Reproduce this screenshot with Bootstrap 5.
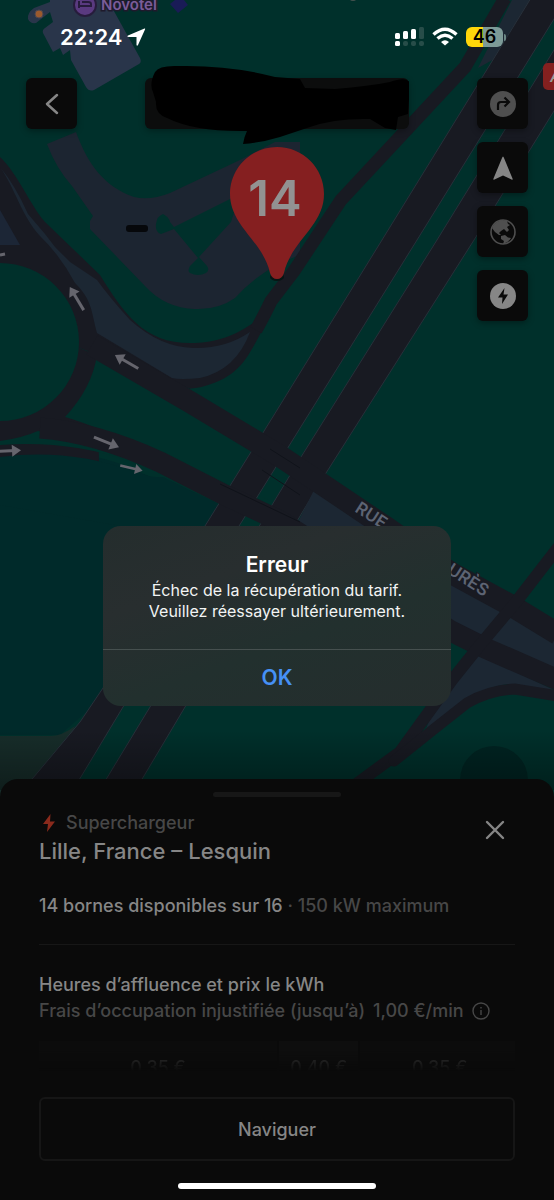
<!DOCTYPE html>
<html lang="fr">
<head>
<meta charset="utf-8">
<meta name="viewport" content="width=device-width, initial-scale=1">
<title>Superchargeur</title>
<link href="https://cdn.jsdelivr.net/npm/bootstrap@5.3.0/dist/css/bootstrap.min.css" rel="stylesheet">
<style>
  body { font-family: Inter, "Liberation Sans", sans-serif; background: #0a0a0a; color: #868686; }
  .screen { background: #00302b; }
  .map-layer { inset: 0; }
  .over-map { z-index: 1; }

  .status-bar { height: 78px; padding: 0 48px 4px 60px; color: #fff; }
  .clock { font-size: 22px; line-height: 28px; font-weight: 600; }
  .battery { width: 37px; height: 20px; border-radius: 6px; background: linear-gradient(90deg, #ffd60a 46%, #7d9a97 46%); color: #000; font-size: 18px; line-height: 20px; font-weight: 600; }
  .battery-cap { width: 2px; height: 7px; margin-left: 1px; border-radius: 0 2px 2px 0; background: #6c8785; }

  .controls { padding: 0 26px; gap: 68px; }
  .map-btn { width: 51px; height: 51px; border: 0; border-radius: 6px; background: #0a0a0a; color: #868686; box-shadow: 0 2px 6px rgba(0, 0, 0, .35); }
  .map-btn:hover { background: #151515; }
  .map-btn.dim { color: #4f4f4f; }
  .stack { gap: 13px; }
  .place-box { height: 51px; border-radius: 6px; background: #0c0d0d; box-shadow: 0 2px 6px rgba(0, 0, 0, .3); }
  .marker-ink { left: 0; top: -14px; width: 100%; height: 84px; }

  .alert-layer { inset: 0; padding-top: 32px; z-index: 3; }
  .alert-box { width: 348px; border-radius: 18px; background: linear-gradient(160deg, #242d2d 0%, #282e2f 30%, #22302e 60%, #252d2d 100%); color: #f2f4f4; overflow: hidden; }
  .alert-text { padding: 25px 24px 27px; }
  .alert-text h1 { font-size: 21px; line-height: 28px; font-weight: 600; color: #fff; }
  .alert-text p { padding: 1px 16px 0; font-size: 16px; line-height: 21px; }
  .alert-ok { height: 57px; border: 0; border-top: 1px solid #46504f; background: transparent; color: #4690f5; font-size: 21px; line-height: 28px; font-weight: 600; }

  .sheet { background: #0a0a0a; border-radius: 18px 18px 0 0; padding: 13px 39px 11px; z-index: 2; }
  .grip { width: 128px; height: 5px; border-radius: 3px; background: #171717; }
  .kind { margin-top: 14px; font-size: 18px; line-height: 24px; font-weight: 500; gap: 8px; }
  .muted { color: #474747; }
  .place { font-size: 22px; line-height: 32px; font-weight: 500; }
  .close-btn { width: 40px; height: 40px; margin-top: 13px; border: 0; background: transparent; color: #868686; }
  .line { font-size: 18px; line-height: 26px; font-weight: 500; }
  .stalls { margin-top: 26px; }
  .sep { height: 1px; background: #171717; margin: 25px 0 27px; }
  .info-btn { border: 0; background: transparent; color: #474747; }
  .rates { height: 30px; margin-top: 17px; gap: 2px; overflow: hidden; font-size: 18px; line-height: 24px; font-weight: 500; color: #363636; -webkit-mask-image: linear-gradient(#000 30%, transparent 100%); mask-image: linear-gradient(#000 30%, transparent 100%); }
  .rate { background: #0c0c0c; padding-top: 15px; min-width: 0; }
  .rate.peak { background: #0e0e0e; }
  .go-btn { height: 64px; margin-top: 26px; border: 2px solid #161616; border-radius: 6px; background: transparent; color: #868686; font-size: 18px; font-weight: 500; }
  .home-bar { width: 198px; height: 6px; border-radius: 3px; background: #fff; margin-top: 22px; }
</style>
</head>
<body>
<main class="screen position-relative min-vh-100 d-flex flex-column overflow-hidden">

  <svg class="map-layer position-absolute w-100 h-100" viewBox="0 0 554 1200" preserveAspectRatio="xMidYMin slice" role="img" aria-label="Carte">
    <defs>
      <linearGradient id="fade" x1="0" y1="0" x2="0" y2="1"><stop offset="0" stop-opacity="0"/><stop offset="1" stop-opacity=".35"/></linearGradient>
      <g id="arrow" fill="none" stroke="#65656d" stroke-width="3"><path d="M-13 0H9"/><path d="M5-6L14 0L5 6Z" fill="#65656d" stroke="none"/></g>
    </defs>
    <rect width="554" height="1200" fill="#00302b"/>
    <path d="M0 450C60 446 105 456 140 472L240 520L100 700L60 735H0Z" fill="#002a2a"/>
    <path d="M0 736H50Q62 736 75 726L40 800H0Z" fill="#172d2a"/>
    <!-- buildings -->
    <path d="M50 0H108L115 13L140 58Q142 62 139 64L94 90Q89 92 86 87L71 60L70 50L63 55L60 48L53 52L43 33Q42 30 45 28L53 22L50 12L36 23Q30 24 28 19Q27 13 34 8L50 2Z" fill="#29354a"/>
    <circle cx="39" cy="14" r="4" fill="#9b5a2e" stroke="#4b4650"/>
    <path d="M170 4L175 0H184L188 5L178 13Z" fill="#191b56"/>
    <circle cx="85" cy="5" r="11" fill="#5a3a80" stroke="#271c3c" stroke-width="2"/>
    <path d="M79 1V8M79 6H91V4Q91 2 88 2H82" fill="none" stroke="#271c3c" stroke-width="2"/>
    <text x="101" y="10" font-size="15" font-weight="600" fill="#7a5d99" stroke="#1e1a2c" stroke-width="3" paint-order="stroke">Novotel</text>
    <!-- parking -->
    <path d="M47 144L76 132C88 165 105 187 134 197Q150 201 170 193L240 160L275 142H300V255Q262 268 235 298Q218 310 195 309Q165 308 145 286L90 229V221L93 216L72 186Q56 168 47 144Z" fill="#1c2531"/>
    <path d="M174 227L240 194L231 222L199 257L207 266Q210 270 206 273Q198 277 190 273Q187 271 190 266L198 258L174 229L161 234Q155 232 156 224Q157 216 163 214Q169 217 170 222Z" fill="#00302b"/>
    <rect x="126" y="225" width="22" height="7" rx="3" fill="#06080b"/>
    <!-- slip roads and islands -->
    <path d="M0 157C18 174 30 205 45 222L100 275C125 315 145 345 195 343Q225 342 250 325L262 318L268 320C250 350 245 375 205 386Q190 390 180 388L97 352L100 520L0 500Z" fill="#181a22"/>
    <path d="M66 343L97 355Q92 388 65 417Q90 424 150 450L200 474L270 500V455L188 388Z" fill="#00302b"/>
    <path d="M0 167C16 190 21 215 40 236Q60 255 75 283C92 300 91 310 97 333L172 378Q180 380 200 378Q236 370 250 332Q225 349 193 348Q160 347 130 320Q110 298 97 280L70 262L55 247L45 234L28 214Q15 185 0 167Z" fill="#1c2733"/>
    <path d="M0 210L20 245H0Z" fill="#1c2636"/>
    <path d="M0 505V457Q70 448 135 472Q150 478 163 477L235 512L200 540Z" fill="#002a2a"/>
    <path d="M0 450V441Q22 438 38 431Q70 437 128 461Q70 440 0 445Z" fill="#00302b"/>
    <circle cx="0" cy="342" r="79" fill="#00302b"/>
    <!-- motorways -->
    <g fill="#181a22" stroke="#27303a" stroke-width="1">
      <path d="M512 0H532L496 58L478 68Z" fill="#1c2733" stroke="none"/>
      <path d="M531-2H567L417 240L274 470L196 595L123 707L70 795H18L33 778L80 722L103 688L205 526L274 415L382 240Z"/>
      <path d="M586-2H624L474 240L326 473L185 707L132 796H96L150 707L301 457L437 240Z"/>
    </g>
    <g fill="none" stroke="#181a22">
      <path d="M505-2L465 67L397 140L341 200L294 271L271 301Q266 312 256 330" stroke-width="13"/>
      <!-- between the two carriageways of the street -->
      <path d="M314 490L371 527L451 575L554 632V682L485 650L451 630L296 526Z" fill="#1c2733" stroke="none"/>
      <path d="M473 650L480 655L554 690L508 684Q478 688 455 713L425 732L440 690Z" fill="#1c2733" stroke="none"/>
      <path d="M92 345L190 402L280 456L387 528L451 573L512 606L558 634" stroke-width="22"/>
      <path d="M40 428Q95 432 160 462L225 495L280 521L451 631L485 648L558 680" stroke-width="21"/>
      <path d="M560 545L516 602L480 645L452 680L400 752L355 785" stroke-width="12" stroke-linejoin="round"/>
      <path d="M394 761L434 729L467 703Q490 690 515 689L558 696" stroke-width="11" stroke-linecap="round"/>
    </g>
    <path d="M220 484L300 522M270 449L300 468M262 470L300 495" fill="none" stroke="#10131a" stroke-width="1"/>
    <!-- driving directions -->
    <use href="#arrow" transform="translate(77 299) rotate(-121)"/>
    <use href="#arrow" transform="translate(127 362) rotate(-150)"/>
    <use href="#arrow" transform="translate(106 442) rotate(22)"/>
    <use href="#arrow" transform="translate(131 468) rotate(13) scale(.85)"/>
    <use href="#arrow" transform="translate(7 451) rotate(-3)"/>
    <path d="M0 255L5 254" stroke="#65656d" stroke-width="3"/>
    <g fill="#5d6473" stroke="#181a22" stroke-width="2" paint-order="stroke" font-size="17" font-weight="600">
      <text transform="translate(354 511) rotate(33)">RUE</text>
      <text transform="translate(484 597) rotate(33)" text-anchor="end">JAURÈS</text>
    </g>
    <circle cx="494" cy="780" r="34" fill="#002422"/>
    <rect y="730" width="554" height="60" fill="url(#fade)"/>
    <rect x="543" y="63" width="40" height="27" rx="5" fill="#84201f"/>
    <text x="550" y="82" font-size="15" font-weight="600" font-style="italic" fill="#999">A</text>
    <circle cx="353" cy="-3" r="4" fill="#45524f"/>
    <!-- charger pin -->
    <ellipse cx="277" cy="277" rx="7" ry="4" fill="#071514"/>
    <path d="M277 147C303 147 324 168 324 194C324 226 291 241 284 273Q282 279 277 279Q272 279 270 273C263 241 230 226 230 194C230 168 251 147 277 147Z" fill="#851f20"/>
    <text x="275" y="216" text-anchor="middle" font-size="49" font-weight="600" fill="#929292">14</text>
  </svg>

  <header class="status-bar over-map d-flex align-items-center justify-content-between">
    <div class="d-flex align-items-center gap-1">
      <span class="clock">22:24</span>
      <svg width="20" height="20" viewBox="0 0 20 20" fill="#fff" aria-hidden="true"><path d="M18.500 1.500Q19.500 1 19 2.500L12 18Q11 19.500 10.500 18V10H2.500Q0.500 9.500 2 8.500Z"/></svg>
    </div>
    <div class="d-flex align-items-center">
      <svg width="29" height="20" viewBox="0 0 29 20" aria-hidden="true">
        <g fill="#fff"><rect y="6" width="5" height="6" rx="1.500"/><rect x="8" y="4" width="5" height="8" rx="1.500"/><rect x="16" y="2" width="5" height="10" rx="1.500"/><rect y="14" width="5" height="5" rx="1.500"/></g>
        <g fill="#274d49"><rect x="24" y="0" width="5" height="12" rx="1.500"/><rect x="8" y="14" width="5" height="5" rx="2"/><rect x="16" y="14" width="5" height="5" rx="2"/><rect x="24" y="14" width="5" height="5" rx="2"/></g>
      </svg>
      <svg class="ms-2 me-2" width="26" height="20" viewBox="0 0 26 20" fill="none" stroke="#fff" stroke-width="3.400" aria-hidden="true">
        <path d="M1.500 7.500Q13-3 24.500 7.500"/><path d="M5.500 11.500Q13 5 20.500 11.500"/><path d="M9 15Q13 11.500 17 15L13 18.500Z" fill="#fff" stroke="none"/>
      </svg>
      <span class="battery text-center">46</span><span class="battery-cap"></span>
    </div>
  </header>

  <nav class="controls over-map d-flex align-items-start justify-content-between" aria-label="Commandes de la carte">
    <button class="map-btn p-0 d-flex align-items-center justify-content-center flex-shrink-0" type="button" aria-label="Retour">
      <svg width="20" height="24" viewBox="0 0 20 24" fill="none" stroke="currentColor" stroke-width="2.500" stroke-linecap="round" stroke-linejoin="round"><path d="M15 3L5 12L15 21"/></svg>
    </button>
    <div class="place-box position-relative flex-grow-1">
      <svg class="marker-ink position-absolute" viewBox="0 0 264 84" preserveAspectRatio="none" aria-hidden="true">
        <path d="M10 8Q14 1 34 2Q85 1 130 13L155 15L160 24L190 25Q225 22 245 18Q262 12 265 19L263 50L253 53L251 66L240 64L225 55Q190 54 165 63L135 73Q115 79 98 80Q99 73 102 67Q50 68 22 54Q10 50 11 38L8 28Q4 20 10 8Z" fill="#000"/>
      </svg>
    </div>
    <div class="stack d-flex flex-column flex-shrink-0">
      <button class="map-btn dim p-0 d-flex align-items-center justify-content-center" type="button" aria-label="Itinéraire">
        <svg width="26" height="26" viewBox="0 0 26 26"><circle cx="13" cy="13" r="13" fill="currentColor"/><path d="M8 19V14Q8 11 11 11H18.500M14.500 6.500L19 11L14.500 15.500" fill="none" stroke="#0a0a0a" stroke-width="2.200"/></svg>
      </button>
      <button class="map-btn p-0 d-flex align-items-center justify-content-center" type="button" aria-label="Ma position">
        <svg width="20" height="24" viewBox="0 0 20 24" fill="currentColor"><path d="M10 .5Q10.500 .5 11 2L19.500 22.500Q20 24 18.500 23.500L10 19.500L1.500 23.500Q0 24 .5 22.500L9 2Q9.500 .5 10 .5Z"/></svg>
      </button>
      <button class="map-btn dim p-0 d-flex align-items-center justify-content-center" type="button" aria-label="Vue satellite">
        <svg width="26" height="26" viewBox="0 0 26 26"><circle cx="13" cy="13" r="12" fill="none" stroke="currentColor" stroke-width="1.600"/><path d="M2 9Q5 2 12 1L17 2L18 5L20 6L17 8L19 11L17 13L14 10L11 12L9 14L11 16L9 16Q4 13 2 9ZM11 17L15 16L18 18.500L21 19Q18 24 13 25L14 22L11 20Z" fill="currentColor"/></svg>
      </button>
      <button class="map-btn p-0 d-flex align-items-center justify-content-center" type="button" aria-label="Bornes">
        <svg width="26" height="26" viewBox="0 0 26 26"><circle cx="13" cy="13" r="13" fill="currentColor"/><path d="M14.500 5L8 14.500H12.500L12 21L18 11.500H13.500Z" fill="#0a0a0a"/></svg>
      </button>
    </div>
  </nav>

  <section class="sheet position-relative mt-auto">
    <div class="grip mx-auto"></div>
    <div class="d-flex justify-content-between">
      <div>
        <div class="kind muted d-flex align-items-center">
          <svg width="19" height="20" viewBox="0 0 19 20" fill="#8a2a1c" aria-hidden="true"><path d="M11.500 1L4 11H9L8 19L16 8.500H11Z"/></svg>
          <span>Superchargeur</span>
        </div>
        <h2 class="place mb-0">Lille, France – Lesquin</h2>
      </div>
      <button class="close-btn p-0 d-flex align-items-center justify-content-center" type="button" aria-label="Fermer">
        <svg width="20" height="20" viewBox="0 0 20 20" stroke="currentColor" stroke-width="2.400" stroke-linecap="round"><path d="M2 2L18 18M18 2L2 18"/></svg>
      </button>
    </div>
    <p class="line stalls mb-0">14 bornes disponibles sur 16 <span class="muted">· 150 kW maximum</span></p>
    <div class="sep"></div>
    <h3 class="line mb-0">Heures d’affluence et prix le kWh</h3>
    <div class="line muted d-flex align-items-center gap-2">
      <span>Frais d’occupation injustifiée (jusqu’à)</span><span>1,00 €/min</span>
      <button class="info-btn p-0 d-flex" type="button" aria-label="Informations">
        <svg width="18" height="18" viewBox="0 0 18 18" fill="none" stroke="currentColor" stroke-width="1.400"><circle cx="9" cy="9" r="8"/><path d="M9 8V13M9 5V6.500"/></svg>
      </button>
    </div>
    <div class="rates row g-0 flex-nowrap text-center">
      <div class="rate col-6">0,35 €</div>
      <div class="rate peak col-2">0,40 €</div>
      <div class="rate col-4">0,35 €</div>
    </div>
    <button class="go-btn w-100 d-block" type="button">Naviguer</button>
    <div class="home-bar mx-auto"></div>
  </section>

  <div class="alert-layer position-absolute d-flex align-items-center justify-content-center">
    <div class="alert-box" role="alertdialog" aria-labelledby="alert-title" aria-describedby="alert-msg">
      <div class="alert-text text-center">
        <h1 class="mb-0" id="alert-title">Erreur</h1>
        <p class="mb-0" id="alert-msg">Échec de la récupération du tarif. Veuillez réessayer ultérieurement.</p>
      </div>
      <button class="alert-ok w-100 d-block" type="button">OK</button>
    </div>
  </div>
</main>
<script src="https://cdn.jsdelivr.net/npm/bootstrap@5.3.0/dist/js/bootstrap.bundle.min.js"></script>
</body>
</html>
